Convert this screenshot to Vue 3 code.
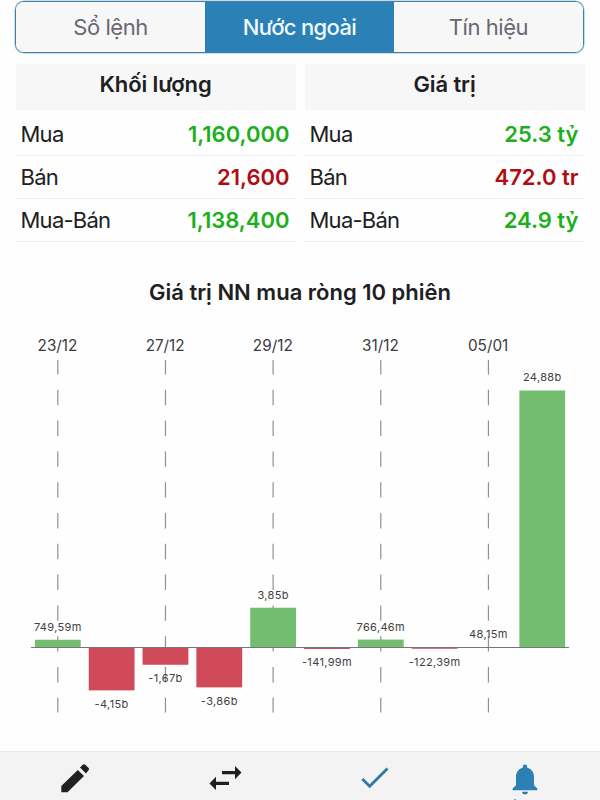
<script setup>
const tabs = [
  { label: 'Sổ lệnh', active: false },
  { label: 'Nước ngoài', active: true },
  { label: 'Tín hiệu', active: false },
]

const tables = [
  {
    title: 'Khối lượng',
    rows: [
      { label: 'Mua', value: '1,160,000', tone: 'up' },
      { label: 'Bán', value: '21,600', tone: 'down' },
      { label: 'Mua-Bán', value: '1,138,400', tone: 'up' },
    ],
  },
  {
    title: 'Giá trị',
    rows: [
      { label: 'Mua', value: '25.3 tỷ', tone: 'up' },
      { label: 'Bán', value: '472.0 tr', tone: 'down' },
      { label: 'Mua-Bán', value: '24.9 tỷ', tone: 'up' },
    ],
  },
]

const BASE = 327.5
const SCALE = 10.33
const STEP = 53.83
const FIRST = 57.8
const BAR = 45.8

const sessions = [
  { v: 0.74959, label: '749,59m', date: '23/12' },
  { v: -4.15, label: '-4,15b' },
  { v: -1.67, label: '-1,67b', date: '27/12' },
  { v: -3.86, label: '-3,86b' },
  { v: 3.85, label: '3,85b', date: '29/12' },
  { v: -0.14199, label: '-141,99m' },
  { v: 0.76646, label: '766,46m', date: '31/12' },
  { v: -0.12239, label: '-122,39m' },
  { v: 0.04815, label: '48,15m', date: '05/01' },
  { v: 24.88, label: '24,88b' },
]

const bars = sessions.map((s, i) => {
  const cx = FIRST + i * STEP
  const h = Math.abs(s.v) * SCALE
  const up = s.v > 0
  return {
    ...s,
    cx,
    h,
    up,
    y: up ? BASE - h : BASE,
    ly: up ? BASE - h - 9 : BASE + h + 17.5,
  }
})
const marks = bars.filter((b) => b.date)
</script>

<template>
  <div class="screen">
    <nav class="tabs">
      <button v-for="t in tabs" :key="t.label" class="tab" :class="{ active: t.active }">{{ t.label }}</button>
    </nav>

    <section class="tables">
      <div v-for="t in tables" :key="t.title" class="table">
        <h2 class="head">{{ t.title }}</h2>
        <div v-for="r in t.rows" :key="r.label" class="row">
          <span class="name">{{ r.label }}</span>
          <span class="value" :class="r.tone">{{ r.value }}</span>
        </div>
      </div>
    </section>

    <h3 class="title">Giá trị NN mua ròng 10 phiên</h3>

    <svg class="chart" width="600" height="410" viewBox="0 0 600 410">
      <g v-for="m in marks" :key="m.date">
        <text class="date" :x="m.cx - 0.3" y="31">{{ m.date }}</text>
        <line class="grid" :x1="m.cx" :x2="m.cx" y1="40" y2="392.5" />
      </g>
      <rect
        v-for="b in bars"
        :key="b.label"
        :class="b.up ? 'bar-up' : 'bar-down'"
        :x="b.cx - BAR / 2"
        :y="b.y"
        :width="BAR"
        :height="b.h"
      />
      <line class="axis" x1="31" x2="569" :y1="BASE" :y2="BASE" />
      <text v-for="b in bars" :key="b.label" class="label" :x="b.cx" :y="b.ly">{{ b.label }}</text>
    </svg>

    <footer class="bar">
      <div class="cell">
        <svg class="icon" viewBox="0 0 50 48">
          <path d="M11.3 43.6V37.4L27.8 21.2L34 27.2L17.5 43.6Z M30 18.7L33 15.9Q34 15 35 15.9L38.6 19.3Q39.6 20.3 38.7 21.3L36 24.7Z" fill="#202022" transform="translate(0 -3.3)" />
        </svg>
      </div>
      <div class="cell">
        <svg class="icon" viewBox="0 0 50 48">
          <path d="M22 19H35V14L41.5 20.6L35 27.2V22.3H22Z M29 29.7H16V24.8L9.5 31.4L16 38V33H29Z" fill="#202022" />
        </svg>
      </div>
      <div class="cell">
        <svg class="icon" viewBox="0 0 50 48">
          <path d="M12.3 27L19.7 34.2L37.5 16.5" fill="none" stroke="#3179a3" stroke-width="2.8" />
        </svg>
      </div>
      <div class="cell">
        <svg class="icon" viewBox="0 0 50 48">
          <path d="M25 12.5C23.7 12.5 22.8 13.4 22.8 14.8V15.7C18.3 16.8 16 20.4 16 25V33.2L12.6 36.6V38.3H37.4V36.6L34 33.2V25C34 20.4 31.7 16.8 27.2 15.7V14.8C27.2 13.4 26.3 12.5 25 12.5Z M22 39.8H28C28 41.4 26.7 42.6 25 42.6C23.3 42.6 22 41.4 22 39.8Z" fill="#2c80b3" />
          <path d="M13.8 48Q14.3 46.8 15.8 47.2L16.2 48Z" fill="#6b8fa5" />
        </svg>
      </div>
    </footer>
  </div>
</template>

<style>
body {
  background: #fefefe;
}
</style>

<style scoped>
.screen {
  width: 600px;
  height: 800px;
  overflow: hidden;
  display: flex;
  flex-direction: column;
  background: #fefefe;
  color: #202022;
  font-family: Inter, sans-serif;
}
.tabs {
  box-sizing: border-box;
  flex: none;
  height: 52px;
  margin: 1px 16px 0 15px;
  display: grid;
  grid-template-columns: 189px 189px 1fr;
  border: 1px solid #4380a5;
  border-radius: 9px;
  overflow: hidden;
  box-shadow: 0 0 0 0.5px #8fb9d2;
}
.tab {
  border: 0;
  padding: 0;
  margin: 0;
  background: #f7f7f7;
  color: #686774;
  font: 400 22px/50px Inter, sans-serif;
  letter-spacing: -0.45px;
}
.tab.active {
  background: #2b80b5;
  color: #f1fbff;
  font-weight: 500;
  letter-spacing: -0.65px;
}
.tables {
  flex: none;
  display: grid;
  grid-template-columns: 280px 280px;
  gap: 9px;
  margin: 11px 15.5px 0;
}
.head {
  margin: 0 0 3px;
  height: 46px;
  background: #f7f7f7;
  text-align: center;
  font-size: 22px;
  line-height: 41px;
  font-weight: 600;
  letter-spacing: -0.1px;
}
.row {
  box-sizing: border-box;
  height: 43px;
  padding: 0 6px 0 5px;
  display: flex;
  justify-content: space-between;
  border-bottom: 1px solid #eeeeee;
  font-size: 22px;
  line-height: 42.5px;
}
.name {
  letter-spacing: -0.75px;
}
.value {
  font-weight: 600;
}
.up {
  color: #1cae1c;
}
.down {
  color: #b00d12;
}
.title {
  flex: none;
  margin: 36px 0 0;
  text-align: center;
  font-size: 22px;
  line-height: 28px;
  height: 42px;
  font-weight: 600;
}
.chart {
  flex: none;
  display: block;
}
.date {
  font-size: 15.3px;
  text-anchor: middle;
  fill: #3b3b3d;
}
.label {
  font-size: 11px;
  letter-spacing: 0.35px;
  text-anchor: middle;
  fill: #414143;
}
.grid {
  stroke: #919193;
  stroke-width: 1.2;
  stroke-dasharray: 15.4 15.4;
  stroke-dashoffset: 1;
}
.axis {
  stroke: #77777a;
  stroke-width: 1.2;
}
.bar-up {
  fill: #72bd6f;
}
.bar-down {
  fill: #d14a5a;
}
.bar {
  box-sizing: border-box;
  flex: none;
  margin-top: auto;
  height: 49px;
  display: grid;
  grid-template-columns: repeat(4, 1fr);
  border-top: 1px solid #e9e9e9;
  background: #f3f3f3;
}
.cell {
  display: flex;
  justify-content: center;
}
.icon {
  width: 50px;
  height: 48px;
}
</style>
